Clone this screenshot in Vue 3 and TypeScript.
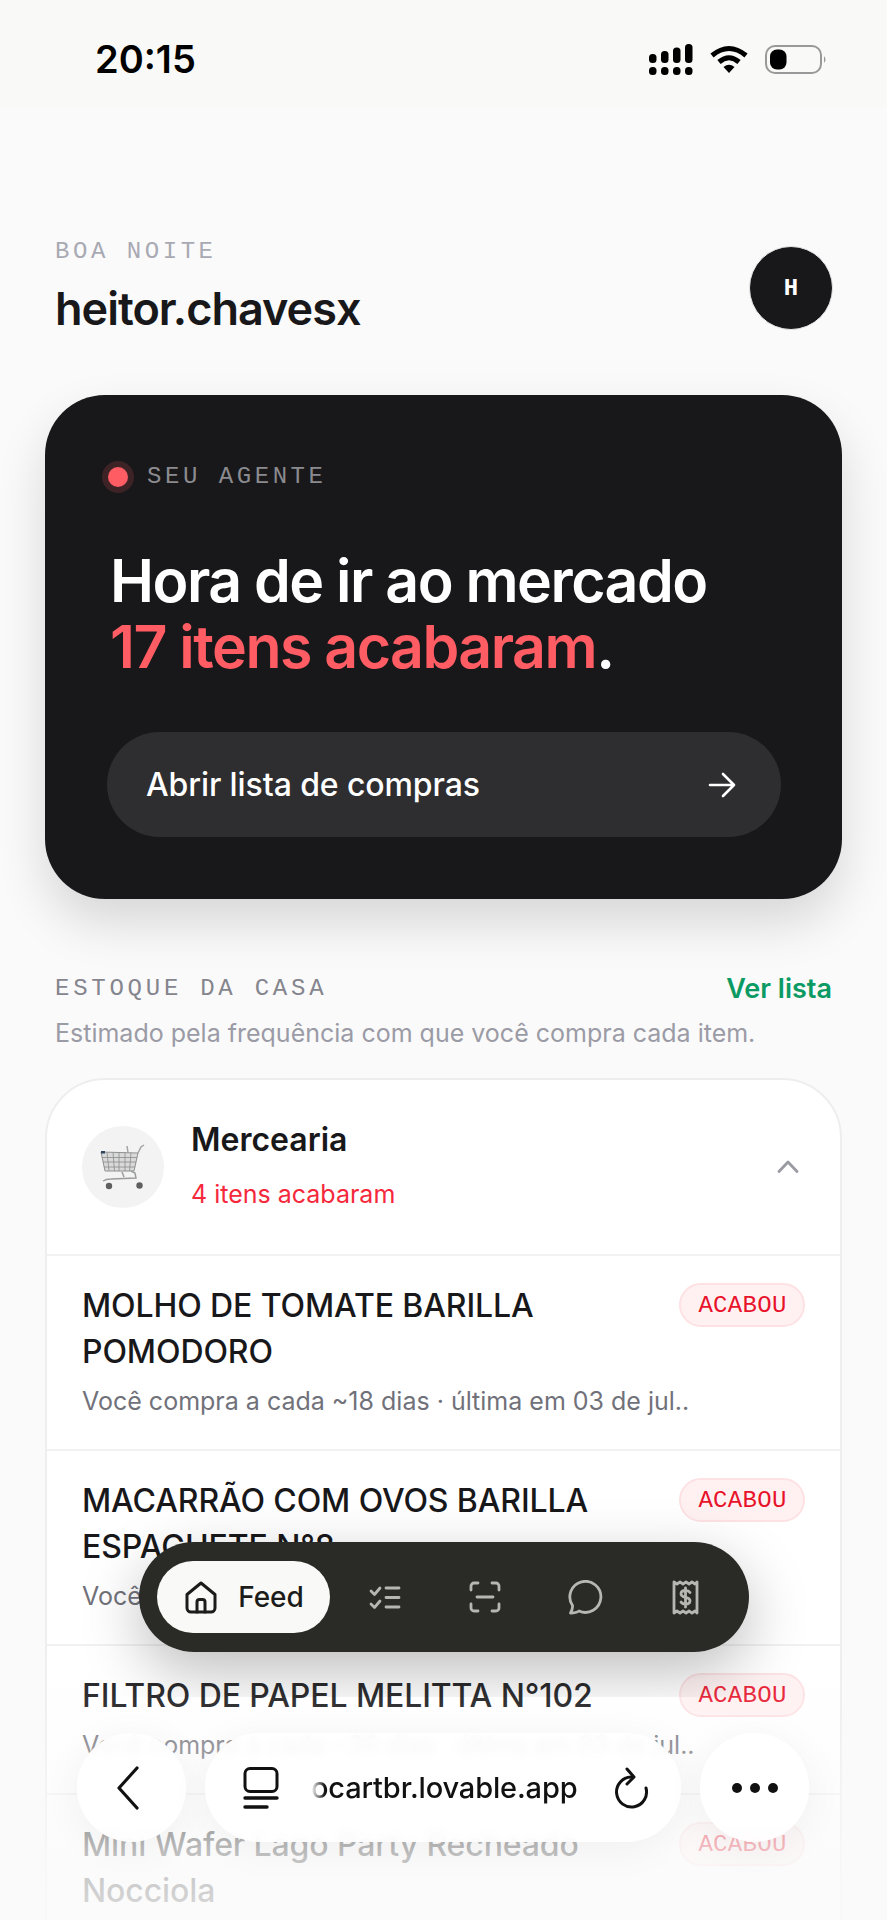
<script setup lang="ts">
interface StockItem {
  name: string;
  note: string;
}

const items: StockItem[] = [
  { name: 'MOLHO DE TOMATE BARILLA POMODORO', note: 'Você compra a cada ~18 dias · última em 03 de jul..' },
  { name: 'MACARRÃO COM OVOS BARILLA ESPAGUETE N°8', note: 'Você compra a cada ~18 dias · última em 03 de jul..' },
  { name: 'FILTRO DE PAPEL MELITTA N°102', note: 'Você compra a cada ~30 dias · última em 03 de jul..' },
  { name: 'Mini Wafer Lago Party Recheado Nocciola', note: 'Você compra a cada ~18 dias · última em 03 de jul..' },
];
</script>

<template>
  <div class="phone">
    <header class="status">
      <span class="time">20:15</span>
      <div class="status-icons">
        <svg width="44" height="31" viewBox="0 0 44 31" fill="#000">
          <rect x="0" y="10" width="7.5" height="9" rx="3.5" />
          <rect x="12" y="7" width="7.5" height="12" rx="3.5" />
          <rect x="24" y="3.500" width="7.5" height="15.500" rx="3.5" />
          <rect x="36" y="0" width="7.5" height="19" rx="3.5" />
          <rect x="0" y="23" width="7.5" height="8" rx="3.5" />
          <rect x="12" y="23" width="7.5" height="8" rx="3.5" />
          <rect x="24" y="23" width="7.5" height="8" rx="3.5" />
          <rect x="36" y="23" width="7.5" height="8" rx="3.5" />
        </svg>
        <svg width="38" height="28" viewBox="0 0 38 28">
          <path d="M2 10.500Q19 -3.500 36 10.500" fill="none" stroke="#000" stroke-width="5" />
          <path d="M9 17Q19 8.500 29 17" fill="none" stroke="#000" stroke-width="5" />
          <path d="M13.500 22Q19 17.500 24.500 22L19 28Z" fill="#000" />
        </svg>
        <svg width="62" height="29" viewBox="0 0 62 29">
          <rect x="1" y="1" width="55" height="27" rx="9" fill="none" stroke="#999" stroke-width="2" />
          <rect x="5" y="4.500" width="16.500" height="20" rx="7" fill="#000" />
          <path d="M59 11q3 3.500 0 7z" fill="#999" />
        </svg>
      </div>
    </header>

    <main class="page">
      <section class="greeting">
        <div>
          <p class="mono greeting-label">BOA NOITE</p>
          <h1 class="username">heitor.chavesx</h1>
        </div>
        <div class="avatar mono">H</div>
      </section>

      <section class="hero">
        <div class="hero-eyebrow">
          <span class="hero-dot"></span>
          <span class="mono">SEU AGENTE</span>
        </div>
        <h2 class="hero-title">Hora de ir ao mercado<br /><em>17 itens acabaram</em>.</h2>
        <button class="hero-btn">
          <span>Abrir lista de compras</span>
          <svg width="28" height="28" viewBox="0 0 28 28" fill="none" stroke="#fff" stroke-width="2.6" stroke-linecap="round" stroke-linejoin="round">
            <path d="M2 14h24M15 3l11 11-11 11" />
          </svg>
        </button>
      </section>

      <section class="stock">
        <div class="stock-head">
          <span class="mono stock-label">ESTOQUE DA CASA</span>
          <a class="stock-link">Ver lista</a>
        </div>
        <p class="stock-hint">Estimado pela frequência com que você compra cada item.</p>

        <div class="card">
          <div class="card-head">
            <div class="cat-icon">
              <svg width="46" height="48" viewBox="0 0 46 48" fill="none">
                <path d="M1 9l37 1-4 18-29 0z" fill="#d9d9da" stroke="#8f9091" stroke-width="1" />
                <path d="M7 9.500l2 18M13 9.500l1.500 18.500M19 10v18M25 10v18M31 10l-1.500 18M2 14.500h35M3 19h33M4 24h31" stroke="#8a8b8c" stroke-width=".8" />
                <rect x="1" y="8" width="4" height="2.500" fill="#2d4660" />
                <path d="M38 10l3-6 3-2M28 9.500L27 3" stroke="#a2a3a4" stroke-width="1.500" />
                <path d="M3 38q3-2 8-2l25-1-1-5-4-2M22 29l2 5" stroke="#9a9b9c" stroke-width="1.500" />
                <circle cx="9" cy="43" r="3.200" fill="#5f5f5f" />
                <circle cx="39.500" cy="42.500" r="3.200" fill="#5f5f5f" />
              </svg>
            </div>
            <div class="cat-text">
              <span class="cat-title">Mercearia</span>
              <span class="cat-count">4 itens acabaram</span>
            </div>
            <svg class="chevron" width="22" height="13" viewBox="0 0 22 13" fill="none" stroke="#9a9aa2" stroke-width="2.800" stroke-linecap="round" stroke-linejoin="round">
              <path d="M2 11.500L11 2l9 9.500" />
            </svg>
          </div>

          <div v-for="item in items" :key="item.name" class="row">
            <div class="row-top">
              <span class="row-name">{{ item.name }}</span>
              <span class="badge mono">ACABOU</span>
            </div>
            <p class="row-note">{{ item.note }}</p>
          </div>
        </div>
      </section>
    </main>

    <div class="fade"></div>

    <nav class="tabbar">
      <div class="tab-active">
        <svg width="32" height="33" viewBox="0 0 32 33" fill="none" stroke="#1c1c1a" stroke-width="3" stroke-linejoin="round" stroke-linecap="round">
          <path d="M2 13.500L16 2l14 11.500V27a4 4 0 0 1-4 4H6a4 4 0 0 1-4-4z" />
          <path d="M12 31V21a2.500 2.500 0 0 1 2.500-2.500h3A2.500 2.500 0 0 1 20 21v10" />
        </svg>
        <span>Feed</span>
      </div>
      <div class="tab">
        <svg width="32" height="25" viewBox="0 0 32 25" fill="none" stroke="#b6b6b2" stroke-width="2.800" stroke-linecap="round" stroke-linejoin="round">
          <path d="M2 6l3.500 3.500L11 3M2 19l3.500 3.500L11 16" />
          <path d="M17 3h13M17 12.500h13M17 22h13" />
        </svg>
      </div>
      <div class="tab">
        <svg width="32" height="32" viewBox="0 0 32 32" fill="none" stroke="#b6b6b2" stroke-width="2.800" stroke-linecap="round" stroke-linejoin="round">
          <path d="M2 9V5a3 3 0 0 1 3-3h4M23 2h4a3 3 0 0 1 3 3v4M30 23v4a3 3 0 0 1-3 3h-4M9 30H5a3 3 0 0 1-3-3v-4M8 16h16" />
        </svg>
      </div>
      <div class="tab">
        <svg width="35" height="35" viewBox="0 0 35 35" fill="none" stroke="#b6b6b2" stroke-width="2.800" stroke-linecap="round" stroke-linejoin="round">
          <path d="M11 31A15.500 15.500 0 1 0 4.500 25.500C4.800 28 4 30.500 2.500 33C6 33 9 32.500 11 31Z" />
        </svg>
      </div>
      <div class="tab">
        <svg width="27" height="35" viewBox="0 0 27 35" fill="none" stroke="#b6b6b2" stroke-width="2.800" stroke-linejoin="round" stroke-linecap="round">
          <path d="M2 2l3 2 3-2 3 2 3-2 3 2 3-2 3 2 2-2v31l-2-2-3 2-3-2-3 2-3-2-3 2-3-2-3 2z" />
          <path d="M18 12.500c-1-1.500-2.500-2-4.500-2-2.500 0-4.500 1-4.500 3.300s2 3 4.500 3.500 4.500 1.200 4.500 3.500-2 3.300-4.500 3.300c-2 0-3.500-.6-4.500-2M13.500 8v19" />
        </svg>
      </div>
    </nav>

    <div class="browser">
      <button class="round">
        <svg class="back" width="24" height="44" viewBox="0 0 24 44" fill="none" stroke="#111" stroke-width="3.200" stroke-linecap="round" stroke-linejoin="round">
          <path d="M21 2L3 22l18 20" />
        </svg>
      </button>
      <div class="url">
        <svg width="36" height="42" viewBox="0 0 36 42" fill="none" stroke="#111" stroke-linecap="round">
          <rect x="2" y="1.500" width="32" height="23" rx="5" stroke-width="3" />
          <path d="M2 31h32M2 40h22" stroke-width="3.400" />
        </svg>
        <span class="url-text">ocartbr.lovable.app</span>
        <svg width="36" height="42" viewBox="0 0 36 42" fill="none" stroke="#111" stroke-width="3" stroke-linecap="round" stroke-linejoin="round">
          <path d="M18 10A15 15 0 1 0 33 21" />
          <path d="M14 2l7 8-7 7" />
        </svg>
      </div>
      <button class="round">
        <span class="dots"><i></i><i></i><i></i></span>
      </button>
    </div>
  </div>
</template>

<style scoped>
.phone {
  position: relative;
  width: 887px;
  height: 1920px;
  overflow: hidden;
  background: #fafafa;
  color: #18181b;
  font-family: Inter, "Noto Sans", sans-serif;
}
.mono {
  font-family: "Liberation Mono", monospace;
}

/* status bar */
.status {
  box-sizing: border-box;
  height: 107px;
  padding: 11px 60px 0 95px;
  display: flex;
  align-items: center;
  justify-content: space-between;
  background: #f9f9f7;
}
.time {
  font-size: 38px;
  font-weight: 600;
  letter-spacing: 0;
  color: #000;
}
.status-icons {
  display: flex;
  align-items: center;
  gap: 17px;
}

.page {
  padding: 0 46px;
}

/* greeting */
.greeting {
  display: flex;
  align-items: flex-start;
  justify-content: space-between;
  padding: 132px 9px 60px 9px;
}
.greeting-label {
  margin: 0 0 18px;
  font-size: 24px;
  line-height: 26px;
  letter-spacing: 3.550px;
  color: #a9a9b3;
}
.username {
  margin: 0;
  font-size: 45px;
  line-height: 52px;
  font-weight: 600;
  letter-spacing: -1px;
  color: #18181b;
}
.avatar {
  box-sizing: border-box;
  width: 84px;
  height: 84px;
  margin: 7px -1px 0 0;
  border-radius: 50%;
  border: 1px solid #e6e6e8;
  background: #18181b;
  color: #fff;
  font-size: 24px;
  font-weight: 700;
  display: flex;
  align-items: center;
  justify-content: center;
}

/* hero */
.hero {
  margin: 0 -1px;
  height: 504px;
  box-sizing: border-box;
  padding: 69px 61px 0 62px;
  border-radius: 60px;
  background: #18181b;
  box-shadow: 0 24px 50px rgba(0, 0, 0, 0.14);
}
.hero-eyebrow {
  display: flex;
  align-items: center;
  gap: 19px;
  padding-left: 1px;
  font-size: 24px;
  line-height: 26px;
  letter-spacing: 3.550px;
  color: #8b8b8f;
}
.hero-dot {
  width: 20px;
  height: 20px;
  border-radius: 50%;
  background: #ff5c63;
  box-shadow: 0 0 0 6px rgba(255, 92, 99, 0.16);
}
.hero-title {
  margin: 58px 0 52px 3px;
  font-size: 59px;
  line-height: 66px;
  font-weight: 600;
  letter-spacing: -1.500px;
  color: #fff;
}
.hero-title em {
  font-style: normal;
  color: #ff5c63;
}
.hero-btn {
  box-sizing: border-box;
  width: 100%;
  height: 105px;
  padding: 0 45px 0 39px;
  display: flex;
  align-items: center;
  justify-content: space-between;
  border: 0;
  border-radius: 53px;
  background: #2e2e30;
  color: #fff;
  font-family: inherit;
  font-size: 32px;
  font-weight: 500;
  letter-spacing: -0.100px;
}

/* stock */
.stock {
  margin-top: 76px;
}
.stock-head {
  display: flex;
  align-items: center;
  justify-content: space-between;
  padding: 0 9px;
  height: 26px;
}
.stock-label {
  font-size: 24px;
  letter-spacing: 3.750px;
  color: #85858e;
}
.stock-link {
  font-size: 27px;
  font-weight: 600;
  color: #0b9a63;
}
.stock-hint {
  margin: 15px 0 28px;
  padding-left: 9px;
  font-size: 25px;
  line-height: 34px;
  color: #9b9ba6;
}

.card {
  margin: 0 -1px;
  border: 2px solid #eeeeef;
  border-radius: 60px 60px 0 0;
  background: #fff;
}
.card-head {
  height: 174px;
  padding: 0 41px 0 35px;
  display: flex;
  align-items: center;
  border-bottom: 2px solid #f1f1f2;
}
.cat-icon {
  width: 82px;
  height: 82px;
  border-radius: 50%;
  background: #f3f3f3;
  display: flex;
  align-items: center;
  justify-content: center;
  flex: none;
}
.cat-text {
  display: flex;
  flex-direction: column;
  gap: 17px;
  margin: 0 0 3px 27px;
  flex: 1;
}
.cat-title {
  font-size: 32px;
  line-height: 40px;
  font-weight: 600;
}
.cat-count {
  font-size: 25px;
  line-height: 34px;
  color: #f5283c;
}
.chevron {
  margin-bottom: 2px;
}
.row {
  padding: 27px 35px 31px;
  border-bottom: 2px solid #f1f1f2;
}
.row-top {
  display: flex;
  align-items: flex-start;
  justify-content: space-between;
  gap: 60px;
}
.row-name {
  font-size: 32px;
  line-height: 46px;
  font-weight: 500;
  letter-spacing: -0.100px;
}
.badge {
  box-sizing: border-box;
  flex: none;
  width: 126px;
  height: 44px;
  padding-left: 1px;
  display: flex;
  align-items: center;
  justify-content: center;
  border: 2px solid #fde1e3;
  border-radius: 22px;
  background: #fff1f2;
  color: #e8132b;
  font-size: 24px;
  letter-spacing: 0.300px;
}
.row-note {
  margin: 9px 0 0;
  font-size: 25px;
  line-height: 34px;
  color: #71717a;
  white-space: nowrap;
}

/* bottom fade */
.fade {
  position: absolute;
  left: 0;
  right: 0;
  top: 1640px;
  bottom: 0;
  background: linear-gradient(
    to bottom,
    rgba(250, 250, 250, 0) 0,
    rgba(250, 250, 250, 0.12) 68px,
    rgba(250, 250, 250, 0.76) 218px,
    rgba(250, 250, 250, 0.86) 280px
  );
}

/* floating nav */
.tabbar {
  position: absolute;
  z-index: 1;
  left: 139px;
  top: 1542px;
  box-sizing: border-box;
  width: 610px;
  height: 110px;
  padding-left: 18px;
  display: flex;
  align-items: center;
  border-radius: 55px;
  background: #2a2a26;
}
.tabbar::before {
  content: "";
  position: absolute;
  inset: 0;
  z-index: -1;
  border-radius: 55px;
  box-shadow: 0 20px 60px rgba(0, 0, 0, 0.26);
  clip-path: inset(-80px -120px -45px -120px);
}
.tab {
  width: 100px;
  display: flex;
  align-items: center;
  justify-content: center;
}
.tab-active {
  box-sizing: border-box;
  width: 173px;
  height: 72px;
  margin-right: 5px;
  padding-left: 2px;
  display: flex;
  align-items: center;
  justify-content: center;
  gap: 21px;
  border-radius: 36px;
  background: #f9f9f7;
  color: #1c1c1a;
  font-size: 28px;
  font-weight: 500;
}

/* browser chrome */
.browser {
  position: absolute;
  z-index: 2;
  left: 77px;
  top: 1733px;
  width: 732px;
  display: flex;
  gap: 19px;
}
.round,
.url {
  height: 109px;
  border: 0;
  background: rgba(255, 255, 255, 0.9);
  backdrop-filter: blur(5px);
  box-shadow: 0 6px 40px rgba(0, 0, 0, 0.05);
}
.round {
  width: 109px;
  padding: 0;
  border-radius: 50%;
  display: flex;
  align-items: center;
  justify-content: center;
  flex: none;
}
.back {
  margin-right: 8px;
}
.url {
  flex: 1;
  box-sizing: border-box;
  padding: 0 32px 0 38px;
  border-radius: 55px;
  display: flex;
  align-items: center;
  justify-content: space-between;
}
.url-text {
  width: 270px;
  margin: 0 28px;
  font-size: 29px;
  font-weight: 500;
  letter-spacing: -0.150px;
  color: #111;
  white-space: nowrap;
  -webkit-mask-image: linear-gradient(to right, transparent 0, #000 14px);
  mask-image: linear-gradient(to right, transparent 0, #000 14px);
}
.dots {
  display: flex;
  gap: 8px;
}
.dots i {
  width: 10px;
  height: 10px;
  border-radius: 50%;
  background: #111;
}
</style>

<style>
html,
body {
  margin: 0;
  background: #fafafa;
}
</style>
